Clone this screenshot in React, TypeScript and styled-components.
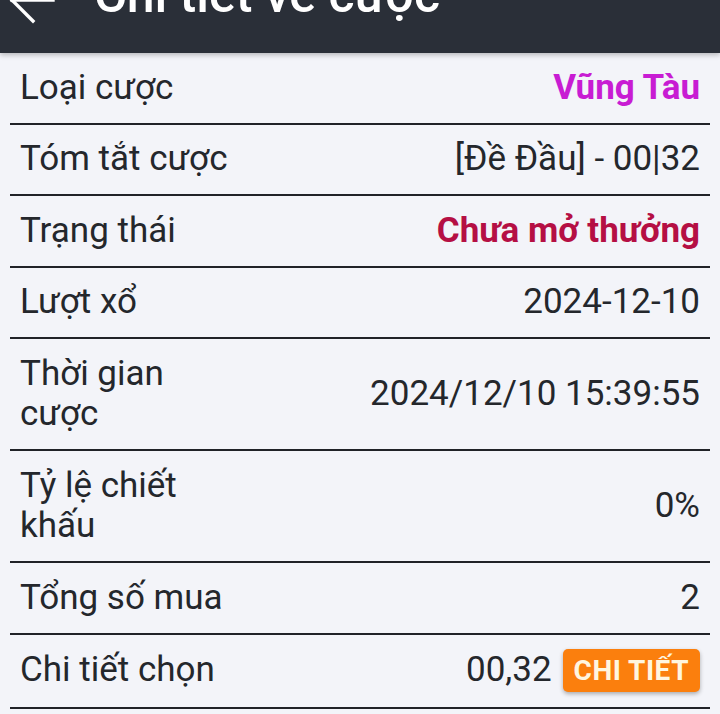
import React from "react";
import styled, { createGlobalStyle } from "styled-components";

const Global = createGlobalStyle`
  html, body { margin: 0; padding: 0; background: #f3f4f9; }
  body { font-family: Roboto, "Noto Sans", sans-serif; overflow: hidden; }
  * { box-sizing: border-box; }
`;

const Page = styled.div`
  width: 720px;
  height: 714px;
  background: #f3f4f9;
  display: flex;
  flex-direction: column;
  overflow: hidden;
`;

const Header = styled.header`
  height: 53px;
  flex: none;
  background: #2a2f38;
  display: flex;
  align-items: flex-start;
  overflow: hidden;
  position: relative;
  z-index: 1;
  box-shadow: 0 2px 5px rgba(0, 0, 0, 0.25);
`;

const BackIcon = styled.svg`
  flex: none;
  margin: -24px 0 0 8px;
  width: 50px;
  height: 48px;
`;

const Title = styled.h1`
  margin: -30px 0 0 36px;
  font-size: 50px;
  line-height: 50px;
  font-weight: 500;
  color: #ffffff;
  white-space: nowrap;
`;

const List = styled.div`
  display: flex;
  flex-direction: column;
  padding: 0 10px;
`;

const Row = styled.div`
  display: flex;
  align-items: center;
  justify-content: space-between;
  gap: 16px;
  padding: 14.5px 10px;
  border-bottom: 2px solid #202228;
`;

const Label = styled.div<{ $narrow?: boolean }>`
  font-size: 35px;
  line-height: 40.5px;
  color: #24272c;
  max-width: ${(p) => (p.$narrow ? "175px" : "none")};
`;

const Value = styled.div<{ $tone?: "magenta" | "red" }>`
  display: flex;
  align-items: center;
  gap: 11px;
  font-size: 35px;
  line-height: 40.5px;
  text-align: right;
  white-space: nowrap;
  font-weight: ${(p) => (p.$tone ? 700 : 400)};
  color: ${(p) =>
    p.$tone === "magenta" ? "#c81cd3" : p.$tone === "red" ? "#b50f44" : "#24272c"};
`;

const DetailButton = styled.button`
  height: 43px;
  padding: 0 11px;
  border: none;
  border-radius: 5px;
  background: #fb7f0d;
  color: #fff6e0;
  font-family: Roboto, "Noto Sans", sans-serif;
  font-size: 28px;
  font-weight: 700;
  letter-spacing: 0.5px;
  box-shadow: 0 2px 4px rgba(0, 0, 0, 0.3);
`;

type Item = {
  label: string;
  value: string;
  tone?: "magenta" | "red";
  narrow?: boolean;
  button?: boolean;
};

const items: Item[] = [
  { label: "Loại cược", value: "Vũng Tàu", tone: "magenta" },
  { label: "Tóm tắt cược", value: "[Đề Đầu] - 00|32" },
  { label: "Trạng thái", value: "Chưa mở thưởng", tone: "red" },
  { label: "Lượt xổ", value: "2024-12-10" },
  { label: "Thời gian cược", value: "2024/12/10 15:39:55", narrow: true },
  { label: "Tỷ lệ chiết khấu", value: "0%", narrow: true },
  { label: "Tổng số mua", value: "2" },
  { label: "Chi tiết chọn", value: "00,32", button: true },
];

export default function App() {
  return (
    <Page>
      <Global />
      <Header>
        <BackIcon viewBox="0 0 50 48" fill="none" stroke="#ffffff" strokeWidth={3.4} strokeLinecap="square">
          <path d="M4 24 L25 45" />
          <path d="M4 24 L25 3" />
          <path d="M4 24 H45" />
        </BackIcon>
        <Title>Chi tiết vé cược</Title>
      </Header>
      <List>
        {items.map((it) => (
          <Row key={it.label}>
            <Label $narrow={it.narrow}>{it.label}</Label>
            <Value $tone={it.tone}>
              {it.value}
              {it.button && <DetailButton>CHI TIẾT</DetailButton>}
            </Value>
          </Row>
        ))}
      </List>
    </Page>
  );
}
